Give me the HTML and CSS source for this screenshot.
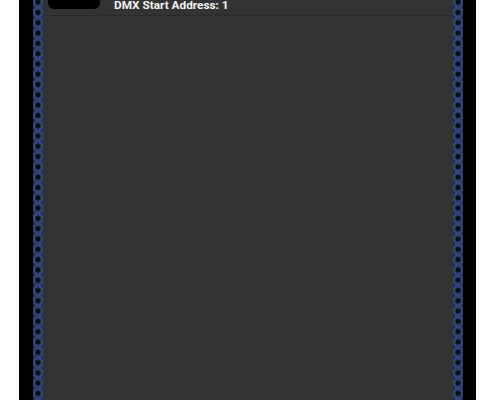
FILE: index.html
```html
<!DOCTYPE html>
<html lang="en">
<head>
    <meta charset="UTF-8">
    <meta name="viewport" content="width=device-width, initial-scale=1.0">
    <title>DMX Fixtures</title>
    <link rel="stylesheet" href="styles.css">
</head>
<body>
    <div class="frame">
        <div class="rail"></div>
        <div class="panel">
            <div class="fixture-row">
                <div class="fixture-thumb"></div>
                <div class="fixture-info">DMX Start Address: 1</div>
            </div>
        </div>
        <div class="rail"></div>
    </div>
</body>
</html>
```

FILE: styles.css
```css
* {
    margin: 0;
    padding: 0;
    box-sizing: border-box;
}

html,
body {
    height: 100%;
    overflow: hidden;
}

body {
    background-color: white;
    padding: 0 19px;
    font-family: Roboto, "Liberation Sans", sans-serif;
}

.frame {
    display: flex;
    height: 100%;
    padding: 0 13px 0 14px;
    background-color: black;
}

/* beaded strip: one hole per tile, with notches on the outer edges */
.rail {
    flex: 0 0 10px;
    background-color: #2f4577;
    background-image:
        radial-gradient(circle at 5px 5.15px, #070a12 0, #070a12 1.9px, transparent 3.3px),
        radial-gradient(circle at 0 0, #0a0f1c 0, transparent 2.6px),
        radial-gradient(circle at 0 10.3px, #0a0f1c 0, transparent 2.6px),
        radial-gradient(circle at 10px 0, #1a2745 0, transparent 2.6px),
        radial-gradient(circle at 10px 10.3px, #1a2745 0, transparent 2.6px);
    background-size: 10px 10.3px;
    background-position: 0 -3px;
}

.panel {
    flex: 1;
    background-color: #333333;
}

.fixture-row {
    display: flex;
    gap: 14px;
    height: 16px;
    padding: 0 5px;
    border-bottom: 1px solid #2b2b2b;
}

.fixture-thumb {
    flex: 0 0 52px;
    height: 9px;
    background-color: black;
    border-radius: 0 0 6px 6px;
}

.fixture-info {
    margin-top: -2px;
    color: #f2f2f2;
    font-size: 11.8px;
    font-weight: 700;
    line-height: 14px;
}
```
